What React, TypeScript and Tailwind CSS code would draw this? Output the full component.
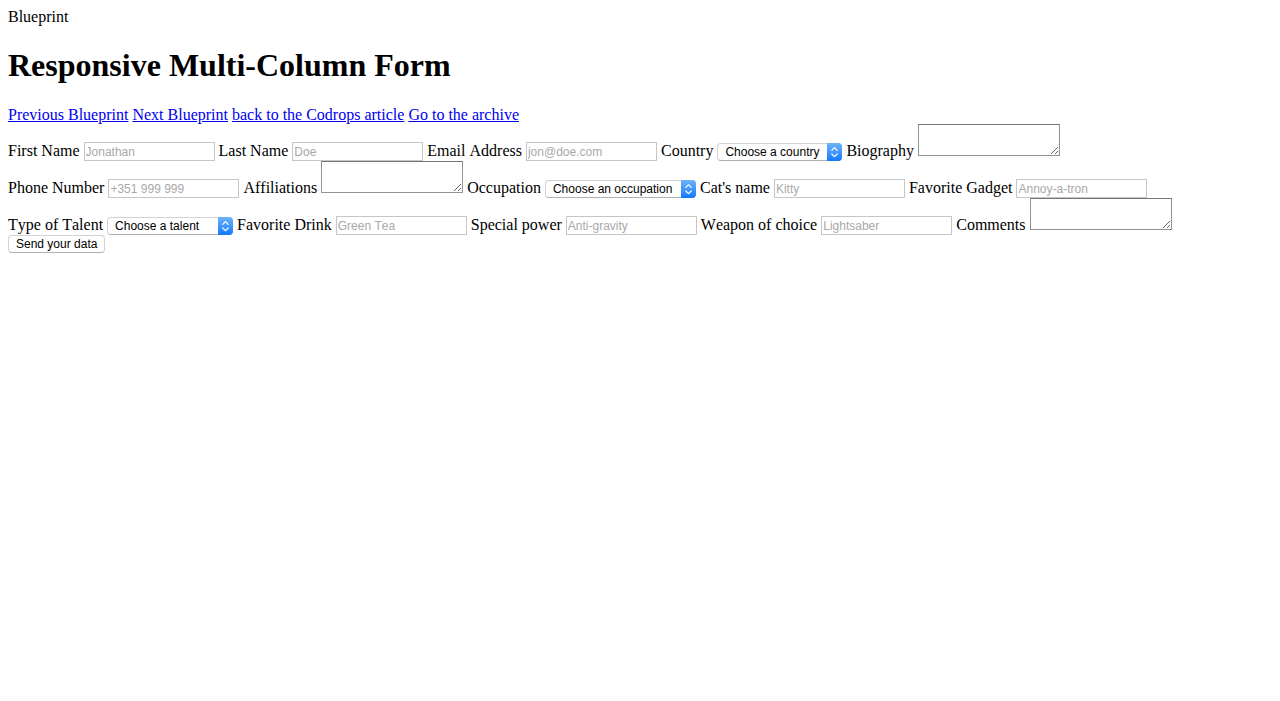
import type { ReactNode } from "react";

const links = [
  "Previous Blueprint",
  "Next Blueprint",
  "back to the Codrops article",
  "Go to the archive",
];

function TextField({ label, hint }: { label: string; hint: string }) {
  return (
    <label>
      {label}{" "}
      <input
        type="text"
        placeholder={hint}
        className="inline-block h-[19px] w-[131px] border border-[#c6c6c6] bg-white px-px pt-[2px] align-baseline font-[Liberation_Sans,sans-serif] text-[12px] leading-[15px] text-black placeholder:text-[#a9a9a9]"
      />
    </label>
  );
}

function AreaField({ label }: { label: string }) {
  return (
    <label>
      {label}{" "}
      <textarea className="inline-block h-[32px] w-[142px] resize border border-[#929292] border-t-[#757575] bg-white p-0.5 align-baseline font-[Liberation_Sans,sans-serif] text-[12px] leading-[13px] text-black" />
    </label>
  );
}

function SelectField({ label, hint, width }: { label: string; hint: string; width: string }) {
  return (
    <label>
      {label}{" "}
      <span className="relative inline-block align-baseline">
        <select
          className={`${width} block h-[18px] appearance-none rounded-[4px] border border-[#d2d2d2] border-b-[#b0b0b0] bg-white pr-4 pl-[7px] font-[Liberation_Sans,sans-serif] text-[12px] leading-[16px] text-black`}
        >
          <option>{hint}</option>
        </select>
        <svg
          className="pointer-events-none absolute top-0 right-0 h-[18px] w-[15px] rounded-r-[4px] bg-linear-to-b from-[#6bb3fa] to-[#0b78fd]"
          viewBox="0 0 15 18"
          fill="none"
          stroke="white"
          strokeWidth="1.2"
          strokeLinecap="round"
          strokeLinejoin="round"
          aria-hidden="true"
        >
          <path d="M4.8 7.3 7.5 4.6l2.7 2.7M4.8 11l2.7 2.7 2.7-2.7" />
        </svg>
      </span>
    </label>
  );
}

function Section({ children }: { children: ReactNode }) {
  return <div className="min-h-[37px]">{children}</div>;
}

export default function App() {
  return (
    <div className="bg-white p-2 font-[Liberation_Serif,serif] text-[16px] leading-[18px] text-black">
      <header>
        <span>Blueprint</span>
        <h1 className="mt-[21px] mb-[22px] text-[32px] leading-[37px] font-bold">
          Responsive Multi-Column Form
        </h1>
        <nav>
          {links.map((text) => (
            <span key={text}>
              <a href="#" className="text-[#0000ee] underline">
                {text}
              </a>{" "}
            </span>
          ))}
        </nav>
      </header>
      <form className="[font-kerning:none]" onSubmit={(e) => e.preventDefault()}>
        <Section>
          <TextField label="First Name" hint="Jonathan" />{" "}
          <TextField label="Last Name" hint="Doe" />{" "}
          <TextField label="Email Address" hint="jon@doe.com" />{" "}
          <SelectField label="Country" hint="Choose a country" width="w-[125px]" />{" "}
          <AreaField label="Biography" />
        </Section>
        <Section>
          <TextField label="Phone Number" hint="+351 999 999" />{" "}
          <AreaField label="Affiliations" />{" "}
          <SelectField label="Occupation" hint="Choose an occupation" width="w-[151px]" />{" "}
          <TextField label="Cat's name" hint="Kitty" />{" "}
          <TextField label="Favorite Gadget" hint="Annoy-a-tron" />
        </Section>
        <Section>
          <SelectField label="Type of Talent" hint="Choose a talent" width="w-[126px]" />{" "}
          <TextField label="Favorite Drink" hint="Green Tea" />{" "}
          <TextField label="Special power" hint="Anti-gravity" />{" "}
          <TextField label="Weapon of choice" hint="Lightsaber" />{" "}
          <AreaField label="Comments" />
        </Section>
        <button
          type="submit"
          className="block h-[18px] rounded-[4px] border border-[#d2d2d2] border-b-[#b0b0b0] bg-white px-[7px] font-[Liberation_Sans,sans-serif] text-[12px] leading-[16px] text-black"
        >
          Send your data
        </button>
      </form>
    </div>
  );
}
